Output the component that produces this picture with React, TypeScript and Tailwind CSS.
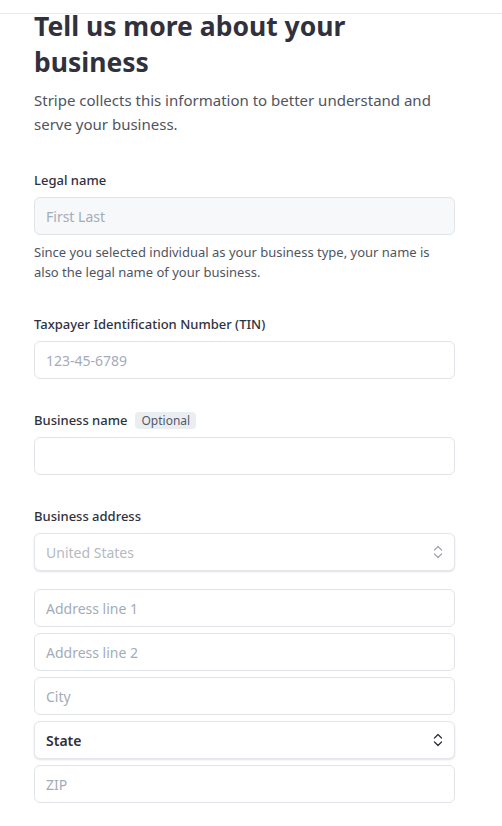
import React from 'react';

const font = { fontFamily: '"Noto Sans", "Open Sans", Arial, sans-serif' };

function UpDown({ className }: { className?: string }) {
  return (
    <svg viewBox="0 0 10 14" className={className} fill="none" stroke="currentColor" strokeWidth="1.3" strokeLinecap="round" strokeLinejoin="round">
      <path d="M1.5 5 L5 1.5 L8.5 5" />
      <path d="M1.5 9 L5 12.5 L8.5 9" />
    </svg>
  );
}

function Field({ placeholder, disabled }: { placeholder: string; disabled?: boolean }) {
  return (
    <div
      className={
        'h-[38px] w-full rounded-md border border-[#e0e3e8] px-[11px] flex items-center text-[14px] text-[#a3acb9] ' +
        (disabled ? 'bg-[#f6f8fa]' : 'bg-white')
      }
    >
      {placeholder}
    </div>
  );
}

function Select({ value, strong }: { value: string; strong?: boolean }) {
  return (
    <div className="h-[38px] w-full rounded-md border border-[#e3e6ea] bg-white px-[11px] flex items-center justify-between shadow-[0_1px_2px_rgba(0,0,0,0.12)]">
      <span className={strong ? 'text-[14px] font-semibold text-[#30313d]' : 'text-[14px] text-[#b5b9c0]'}>{value}</span>
      <UpDown className={strong ? 'w-[10px] h-[14px] text-[#30313d]' : 'w-[10px] h-[14px] text-[#a3a7ae]'} />
    </div>
  );
}

function Label({ children }: { children: React.ReactNode }) {
  return <div className="text-[13px] leading-5 font-medium text-[#30313d] mb-[7px] flex items-center gap-2">{children}</div>;
}

export default function App() {
  return (
    <div className="w-[502px] min-h-[826px] bg-white" style={font}>
      <div className="h-[14px] border-b border-[#ebebeb]" />
      <div className="px-[34px] pr-[47px] -mt-[6px]">
        <h1 className="text-[26.5px] leading-[36px] font-bold text-[#30313d]">
          Tell us more about your<br />business
        </h1>
        <p className="mt-[8px] text-[15px] leading-6 text-[#4f5461]">
          Stripe collects this information to better understand and serve your business.
        </p>

        <div className="mt-[34px]">
          <Label>Legal name</Label>
          <Field placeholder="First Last" disabled />
          <p className="mt-[7px] text-[13px] leading-5 text-[#4f5461]">
            Since you selected individual as your business type, your name is also the legal name of your business.
          </p>
        </div>

        <div className="mt-[32px]">
          <Label>Taxpayer Identification Number (TIN)</Label>
          <Field placeholder="123-45-6789" />
        </div>

        <div className="mt-[31px]">
          <Label>
            Business name
            <span className="rounded-[4px] bg-[#ebeef1] px-[6px] text-[12px] leading-[17px] font-normal text-[#545969]">Optional</span>
          </Label>
          <Field placeholder="" />
        </div>

        <div className="mt-[31px]">
          <Label>Business address</Label>
          <Select value="United States" />
          <div className="mt-[18px] flex flex-col gap-[6px]">
            <Field placeholder="Address line 1" />
            <Field placeholder="Address line 2" />
            <Field placeholder="City" />
            <Select value="State" strong />
            <Field placeholder="ZIP" />
          </div>
        </div>
      </div>
    </div>
  );
}
